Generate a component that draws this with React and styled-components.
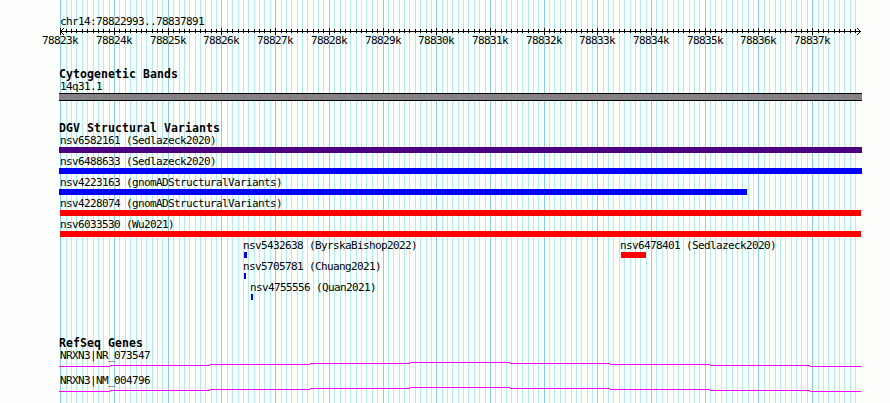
import React from 'react';
import styled, { createGlobalStyle } from 'styled-components';

const GlobalStyle = createGlobalStyle`
    body {
        margin: 0;
        background: #fdfffc;
    }
`;

// first base and bases drawn, 800px wide starting at x = 60
const START = 78822993;
const SPAN = 14898;
const LEFT = 60;

const toX = pos => Math.round(LEFT + ((pos - START) * 800) / SPAN);

const ticks = [];
for (let i = 0; i < 149; i++) {
    ticks.push({ x: toX(78823000 + i * 100), major: i % 10 === 0, k: 78823 + i / 10 });
}

const variants = [
    [{ name: 'nsv6582161 (Sedlazeck2020)', from: 59, to: 862, color: '#4b0082' }],
    [{ name: 'nsv6488633 (Sedlazeck2020)', from: 59, to: 862, color: '#0000ff' }],
    [{ name: 'nsv4223163 (gnomADStructuralVariants)', from: 59, to: 747, color: '#0000ff' }],
    [{ name: 'nsv4228074 (gnomADStructuralVariants)', from: 60, to: 861, color: '#ff0000' }],
    [{ name: 'nsv6033530 (Wu2021)', from: 60, to: 861, color: '#ff0000' }],
    [
        { name: 'nsv5432638 (ByrskaBishop2022)', from: 244, to: 247, color: '#0000ff' },
        { name: 'nsv6478401 (Sedlazeck2020)', from: 621, to: 646, color: '#ff0000' },
    ],
    [{ name: 'nsv5705781 (Chuang2021)', from: 244, to: 246, color: '#0000ff' }],
    [{ name: 'nsv4755556 (Quan2021)', from: 251, to: 253, color: '#0000ff' }],
];

const genes = ['NRXN3|NR_073547', 'NRXN3|NM_004796'];

// labels start at 60 for full width bars, one pixel before the bar otherwise
const labelShift = from => (from <= 60 ? 60 - from : -1);

const App = () => {
    return (
        <Browser>
            <GlobalStyle />
            <GridLines />
            <Tracks>
                <Position>chr14:78822993..78837891</Position>
                <Ruler />
                <Track $height={54}>
                    <Title>Cytogenetic Bands</Title>
                    <BandLabel>14q31.1</BandLabel>
                    <Band />
                </Track>
                <Track $height={215}>
                    <Title>DGV Structural Variants</Title>
                    {variants.map((row, i) => (
                        <Row key={i}>
                            {row.map(v => (
                                <Variant key={v.name} $from={v.from}>
                                    <Label $shift={labelShift(v.from)}>{v.name}</Label>
                                    <Bar $width={v.to - v.from} $color={v.color} />
                                </Variant>
                            ))}
                        </Row>
                    ))}
                </Track>
                <Track $height={68}>
                    <Title>RefSeq Genes</Title>
                    {genes.map(name => (
                        <Gene key={name}>
                            <Label $shift={60}>{name}</Label>
                            <Intron />
                        </Gene>
                    ))}
                </Track>
            </Tracks>
        </Browser>
    );
};

const GridLines = () => (
    <Backdrop width="890" height="403" shapeRendering="crispEdges">
        {ticks.map(t => (
            <rect key={t.x} x={t.x} y="0" width="1" height="403" fill={t.major ? '#87ceeb' : '#afeeee'} />
        ))}
    </Backdrop>
);

const Ruler = () => (
    <RulerSvg width="890" height="22">
        <g shapeRendering="crispEdges">
            <rect x="60" y="5" width="801" height="1" />
            {ticks.map(t => (
                <rect key={t.x} x={t.x} y={t.major ? 2 : 3} width="1" height={t.major ? 7 : 4} />
            ))}
            {[1, 2, 3].map(n => (
                <React.Fragment key={n}>
                    <rect x={60 + n} y={5 - n} width="1" height="1" />
                    <rect x={60 + n} y={5 + n} width="1" height="1" />
                    <rect x={860 - n} y={5 - n} width="1" height="1" />
                    <rect x={860 - n} y={5 + n} width="1" height="1" />
                </React.Fragment>
            ))}
        </g>
        {ticks.filter(t => t.major).map(t => (
            <text key={t.k} x={t.x - 18} y="18">{t.k}k</text>
        ))}
    </RulerSvg>
);

// the hat shaped line between exons, one pixel up every 100px
const Intron = () => (
    <IntronSvg width="890" height="5" shapeRendering="crispEdges">
        {[4, 3, 2, 1, 0, 1, 2, 3, 4].map((y, i) => {
            const x1 = i === 0 ? 59 : 10 + i * 100;
            const x2 = i === 8 ? 861 : 110 + i * 100;
            return <rect key={i} x={x1} y={y} width={x2 - x1} height="1" fill="#ff00ff" />;
        })}
    </IntronSvg>
);

export default App;

const Browser = styled.div`
    position: relative;
    width: 890px;
    height: 403px;
    overflow: hidden;
    background: #fdfffc;
    color: #000;
    font-family: 'DejaVu Sans Mono', monospace;
    font-size: 11px;
    letter-spacing: -0.62px;
    white-space: pre;
`;

const Backdrop = styled.svg`
    position: absolute;
    top: 0;
    left: 0;
`;

const Tracks = styled.div`
    position: relative;
    display: flex;
    flex-direction: column;
    padding-top: 14px;
`;

const Position = styled.div`
    height: 12px;
    line-height: 16px;
    padding-left: 60px;
`;

const RulerSvg = styled.svg`
    display: block;
    margin-bottom: 18px;
`;

const Track = styled.section`
    display: flex;
    flex-direction: column;
    height: ${p => p.$height}px;
`;

const Title = styled.h2`
    margin: 0;
    padding-left: 59px;
    height: 12px;
    line-height: 16px;
    font-size: 11.5px;
    font-weight: bold;
    letter-spacing: 0.08px;
`;

const Label = styled.div`
    height: 15px;
    line-height: 17px;
    margin-left: ${p => p.$shift}px;
`;

const BandLabel = styled(Label)`
    margin-left: 60px;
`;

const Band = styled.div`
    box-sizing: border-box;
    width: 803px;
    height: 8px;
    margin-left: 59px;
    border: solid #000;
    border-width: 1px 0;
    background: #848284;
`;

const Row = styled.div`
    display: grid;
    grid-template-columns: 890px;
    height: 21px;
`;

const Variant = styled.div`
    grid-area: 1 / 1;
    margin-left: ${p => p.$from}px;
`;

const Bar = styled.div`
    width: ${p => p.$width}px;
    height: 6px;
    background: ${p => p.$color};
`;

const Gene = styled.div`
    height: 25px;
`;

const IntronSvg = styled.svg`
    display: block;
`;
